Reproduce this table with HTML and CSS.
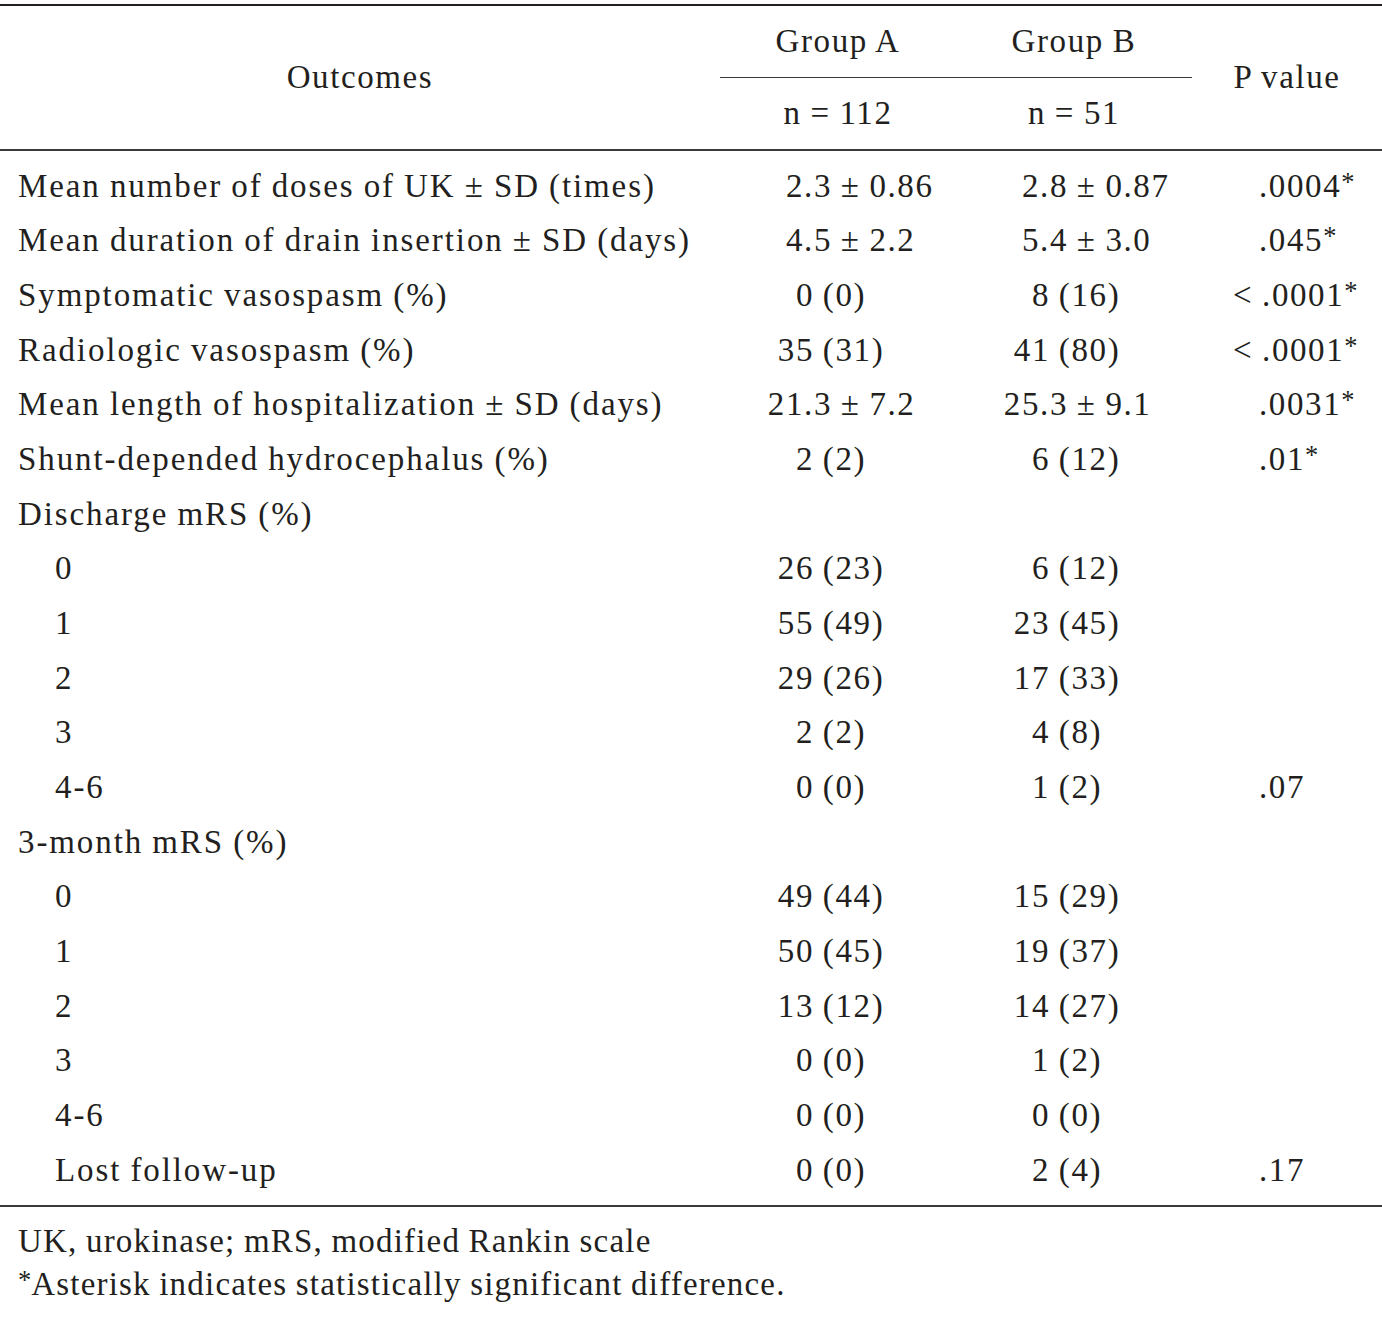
FILE: index.html
```html
<!DOCTYPE html>
<html lang="en">
<head>
<meta charset="utf-8">
<title>Outcomes</title>
<link rel="stylesheet" href="styles.css">
</head>
<body>
<div class="tbl">
  <div class="head">
    <div class="h-out">Outcomes</div>
    <div class="h-grp">
      <div class="hc">Group A</div>
      <div class="hc">Group B</div>
    </div>
    <div class="h-n">
      <div class="hc">n = 112</div>
      <div class="hc">n = 51</div>
    </div>
    <div class="h-p">P value</div>
  </div>
  <div class="body">
    <div class="row"><div class="lbl">Mean number of doses of UK ± SD (times)</div><div class="v"><span class="ld w">2.3</span> ± 0.86</div><div class="v"><span class="ld w">2.8</span> ± 0.87</div><div class="p">.0004<span class="ast">*</span></div></div>
    <div class="row"><div class="lbl">Mean duration of drain insertion ± SD (days)</div><div class="v"><span class="ld w">4.5</span> ± 2.2</div><div class="v"><span class="ld w">5.4</span> ± 3.0</div><div class="p">.045<span class="ast">*</span></div></div>
    <div class="row"><div class="lbl">Symptomatic vasospasm (%)</div><div class="v"><span class="ld">0</span> (0)</div><div class="v"><span class="ld">8</span> (16)</div><div class="p"><span class="lt">&lt; </span>.0001<span class="ast">*</span></div></div>
    <div class="row"><div class="lbl">Radiologic vasospasm (%)</div><div class="v"><span class="ld">35</span> (31)</div><div class="v"><span class="ld">41</span> (80)</div><div class="p"><span class="lt">&lt; </span>.0001<span class="ast">*</span></div></div>
    <div class="row"><div class="lbl">Mean length of hospitalization ± SD (days)</div><div class="v"><span class="ld w">21.3</span> ± 7.2</div><div class="v"><span class="ld w">25.3</span> ± 9.1</div><div class="p">.0031<span class="ast">*</span></div></div>
    <div class="row"><div class="lbl">Shunt-depended hydrocephalus (%)</div><div class="v"><span class="ld">2</span> (2)</div><div class="v"><span class="ld">6</span> (12)</div><div class="p">.01<span class="ast">*</span></div></div>
    <div class="row"><div class="lbl">Discharge mRS (%)</div><div class="v"></div><div class="v"></div><div class="p"></div></div>
    <div class="row"><div class="lbl sub">0</div><div class="v"><span class="ld">26</span> (23)</div><div class="v"><span class="ld">6</span> (12)</div><div class="p"></div></div>
    <div class="row"><div class="lbl sub">1</div><div class="v"><span class="ld">55</span> (49)</div><div class="v"><span class="ld">23</span> (45)</div><div class="p"></div></div>
    <div class="row"><div class="lbl sub">2</div><div class="v"><span class="ld">29</span> (26)</div><div class="v"><span class="ld">17</span> (33)</div><div class="p"></div></div>
    <div class="row"><div class="lbl sub">3</div><div class="v"><span class="ld">2</span> (2)</div><div class="v"><span class="ld">4</span> (8)</div><div class="p"></div></div>
    <div class="row"><div class="lbl sub">4-6</div><div class="v"><span class="ld">0</span> (0)</div><div class="v"><span class="ld">1</span> (2)</div><div class="p">.07</div></div>
    <div class="row"><div class="lbl">3-month mRS (%)</div><div class="v"></div><div class="v"></div><div class="p"></div></div>
    <div class="row"><div class="lbl sub">0</div><div class="v"><span class="ld">49</span> (44)</div><div class="v"><span class="ld">15</span> (29)</div><div class="p"></div></div>
    <div class="row"><div class="lbl sub">1</div><div class="v"><span class="ld">50</span> (45)</div><div class="v"><span class="ld">19</span> (37)</div><div class="p"></div></div>
    <div class="row"><div class="lbl sub">2</div><div class="v"><span class="ld">13</span> (12)</div><div class="v"><span class="ld">14</span> (27)</div><div class="p"></div></div>
    <div class="row"><div class="lbl sub">3</div><div class="v"><span class="ld">0</span> (0)</div><div class="v"><span class="ld">1</span> (2)</div><div class="p"></div></div>
    <div class="row"><div class="lbl sub">4-6</div><div class="v"><span class="ld">0</span> (0)</div><div class="v"><span class="ld">0</span> (0)</div><div class="p"></div></div>
    <div class="row"><div class="lbl sub">Lost follow-up</div><div class="v"><span class="ld">0</span> (0)</div><div class="v"><span class="ld">2</span> (4)</div><div class="p">.17</div></div>
  </div>
  <div class="notes">
    <p>UK, urokinase; mRS, modified Rankin scale</p>
    <p><span class="ast">*</span>Asterisk indicates statistically significant difference.</p>
  </div>
</div>
</body>
</html>
```

FILE: styles.css
```css
html, body {
  margin: 0;
  padding: 0;
  background: #ffffff;
}

body {
  font-family: "Liberation Serif", "Times New Roman", serif;
  font-size: 33px;
  letter-spacing: 1.6px;
  word-spacing: -1px;
  color: #231f20;
}

.tbl {
  margin-top: 4px;
  border-top: 2px solid #231f20;
}

.head {
  display: grid;
  grid-template-columns: 720px 472px 1fr;
  grid-template-rows: 72px 71px;
  border-bottom: 2px solid #3a3a3a;
}

.h-out {
  grid-column: 1;
  grid-row: 1 / 3;
  display: flex;
  align-items: center;
  justify-content: center;
}

.h-grp {
  grid-column: 2;
  grid-row: 1;
  display: grid;
  grid-template-columns: 1fr 1fr;
  border-bottom: 1px solid #3a3a3a;
}

.h-n {
  grid-column: 2;
  grid-row: 2;
  display: grid;
  grid-template-columns: 1fr 1fr;
}

.hc {
  display: flex;
  align-items: center;
  justify-content: center;
}

.h-p {
  grid-column: 3;
  grid-row: 1 / 3;
  display: flex;
  align-items: center;
  justify-content: center;
}

.body {
  padding: 7.7px 0 7.6px;
  border-bottom: 2px solid #3a3a3a;
}

.row {
  display: grid;
  grid-template-columns: 720px 236px 236px 1fr;
  height: 54.67px;
  line-height: 54.67px;
  white-space: nowrap;
}

.lbl {
  padding-left: 18px;
  letter-spacing: 1.9px;
}

.lbl.sub {
  padding-left: 55px;
}

.ld {
  display: inline-block;
  width: 94px;
  text-align: right;
}

.ld.w {
  width: 112px;
}

.p {
  padding-left: 67px;
}

.lt {
  margin-left: -26px;
}

.ast {
  font-size: 0.8em;
  vertical-align: 0.22em;
  line-height: 0;
  letter-spacing: 0;
}

.notes {
  padding-top: 13.5px;
  letter-spacing: 1.2px;
}

.notes p {
  margin: 0;
  padding-left: 18px;
  line-height: 43px;
}
```
